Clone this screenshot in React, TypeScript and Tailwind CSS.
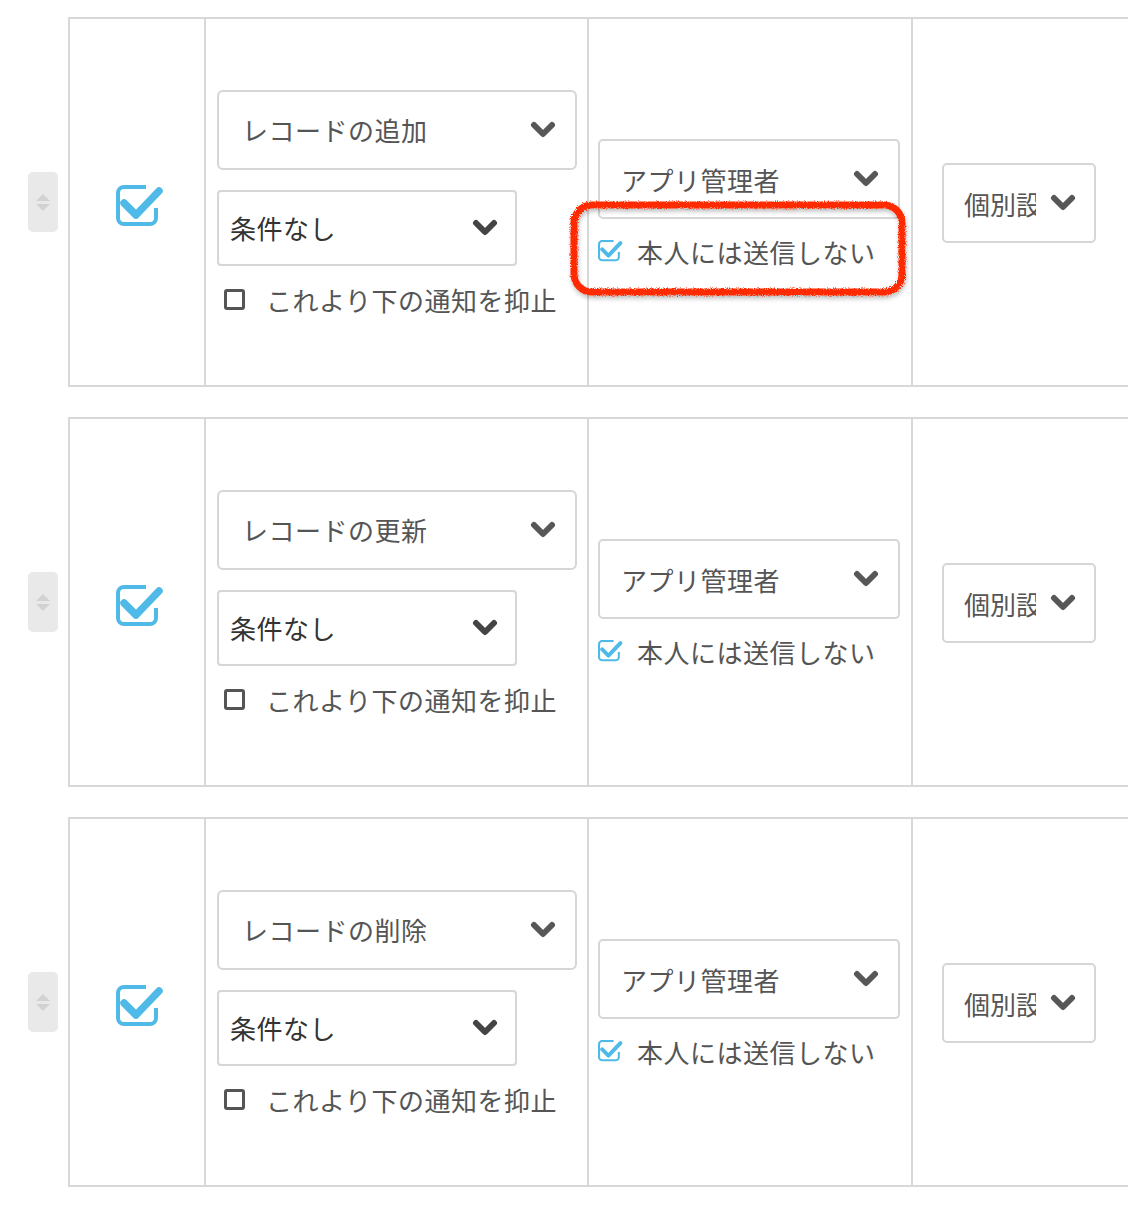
import React from "react";

const FONT = { fontFamily: '"Noto Sans CJK JP", "Noto Sans", sans-serif' };

function CheckSquare({ size = 48 }: { size?: number }) {
  return (
    <svg width={size} height={(size * 44) / 48} viewBox="0 0 48 44" fill="none">
      <path
        d="M30 2 H8 A6 6 0 0 0 2 8 V33 A6 6 0 0 0 8 39 H34 A6 6 0 0 0 40 33 V23"
        stroke="#4fb9e8"
        strokeWidth="4"
      />
      <polyline
        points="8,18 20,30 43,6"
        stroke="#4fb9e8"
        strokeWidth="7.5"
        strokeLinecap="round"
        strokeLinejoin="round"
      />
    </svg>
  );
}

function Chevron({ dark = false }: { dark?: boolean }) {
  return (
    <svg width="26" height="18" viewBox="0 0 26 18" fill="none">
      <polyline
        points="4,4 13,13 22,4"
        stroke={dark ? "#444" : "#575757"}
        strokeWidth="6"
        strokeLinecap="round"
        strokeLinejoin="round"
      />
    </svg>
  );
}

function DragHandle() {
  return (
    <div className="w-[30px] h-[60px] rounded-[5px] bg-[#e9e9e9] flex flex-col items-center justify-center gap-[3px]">
      <div className="w-0 h-0 border-l-[7px] border-r-[7px] border-b-[7px] border-l-transparent border-r-transparent border-b-[#d2d2d2]" />
      <div className="w-0 h-0 border-l-[7px] border-r-[7px] border-t-[7px] border-l-transparent border-r-transparent border-t-[#d2d2d2]" />
    </div>
  );
}

function Annotation() {
  return (
    <svg
      className="absolute left-[562px] top-[192px] pointer-events-none"
      width="356"
      height="116"
      viewBox="0 0 356 116"
      fill="none"
    >
      <defs>
        <filter id="rough" x="-10%" y="-20%" width="120%" height="140%">
          <feTurbulence type="fractalNoise" baseFrequency="0.9" numOctaves="2" seed="3" />
          <feDisplacementMap in="SourceGraphic" scale="4" />
          <feDropShadow dx="1" dy="3" stdDeviation="2" floodColor="#000" floodOpacity="0.25" />
        </filter>
      </defs>
      <rect
        x="12"
        y="13"
        width="328"
        height="87"
        rx="18"
        stroke="#ff2a06"
        strokeWidth="7"
        filter="url(#rough)"
      />
    </svg>
  );
}

const ROWS = ["レコードの追加", "レコードの更新", "レコードの削除"];

function Row({ action }: { action: string }) {
  return (
    <div className="flex items-center h-[370px]">
      <div className="w-[68px] shrink-0 pl-[28px]">
        <DragHandle />
      </div>
      <div className="flex shrink-0 h-full w-[1200px] border-2 border-r-0 border-[#d8d8d8]">
        {/* enable */}
        <div className="w-[136px] shrink-0 border-r-2 border-[#d8d8d8] flex items-center justify-center pl-[5px] pt-[10px]">
          <CheckSquare />
        </div>
        {/* event + condition */}
        <div className="w-[383px] shrink-0 border-r-2 border-[#d8d8d8] flex flex-col justify-center pl-[11px] pt-[4px]">
          <div className="w-[360px] h-[80px] rounded-[6px] border-2 border-[#d6d6d6] flex items-center justify-between pl-[23px] pr-[19px]">
            <span className="text-[26px] tracking-[0.5px] text-[#555]">{action}</span>
            <Chevron />
          </div>
          <div className="mt-[20px] w-[300px] h-[76px] rounded-[4px] border-2 border-[#d6d6d6] flex items-center justify-between pl-[11px] pr-[17px]">
            <span className="text-[26px] tracking-[0.5px] text-[#333]">条件なし</span>
            <Chevron dark />
          </div>
          <div className="mt-[14px] flex items-center pl-[7px]">
            <div className="w-[21px] h-[21px] rounded-[3px] border-[3px] border-[#555]" />
            <span className="ml-[21px] text-[26px] tracking-[0.5px] text-[#555]">これより下の通知を抑止</span>
          </div>
        </div>
        {/* recipients */}
        <div className="w-[324px] shrink-0 border-r-2 border-[#d8d8d8] flex flex-col justify-center pl-[9px] pt-[6px]">
          <div className="w-[302px] h-[80px] rounded-[5px] border-2 border-[#d6d6d6] flex items-center justify-between pl-[21px] pr-[19px]">
            <span className="text-[26px] tracking-[0.5px] text-[#555]">アプリ管理者</span>
            <Chevron />
          </div>
          <div className="mt-[13px] flex items-center">
            <CheckSquare size={25} />
            <span className="ml-[14px] text-[26px] tracking-[0.5px] text-[#555]">本人には送信しない</span>
          </div>
        </div>
        {/* notification setting */}
        <div className="flex-1 flex items-center pl-[29px] pt-[2px]">
          <div className="w-[154px] h-[80px] rounded-[5px] border-2 border-[#d6d6d6] flex items-center pl-[20px] pr-[18px] justify-between">
            <span className="w-[72px] overflow-hidden whitespace-nowrap text-[26px] text-[#555]">個別設定</span>
            <Chevron />
          </div>
        </div>
      </div>
    </div>
  );
}

export default function App() {
  return (
    <div className="relative w-[1128px] h-[1206px] overflow-hidden bg-white" style={FONT}>
      <div className="flex flex-col gap-[30px] pt-[17px]">
        {ROWS.map((a) => (
          <Row key={a} action={a} />
        ))}
      </div>
      <Annotation />
    </div>
  );
}
